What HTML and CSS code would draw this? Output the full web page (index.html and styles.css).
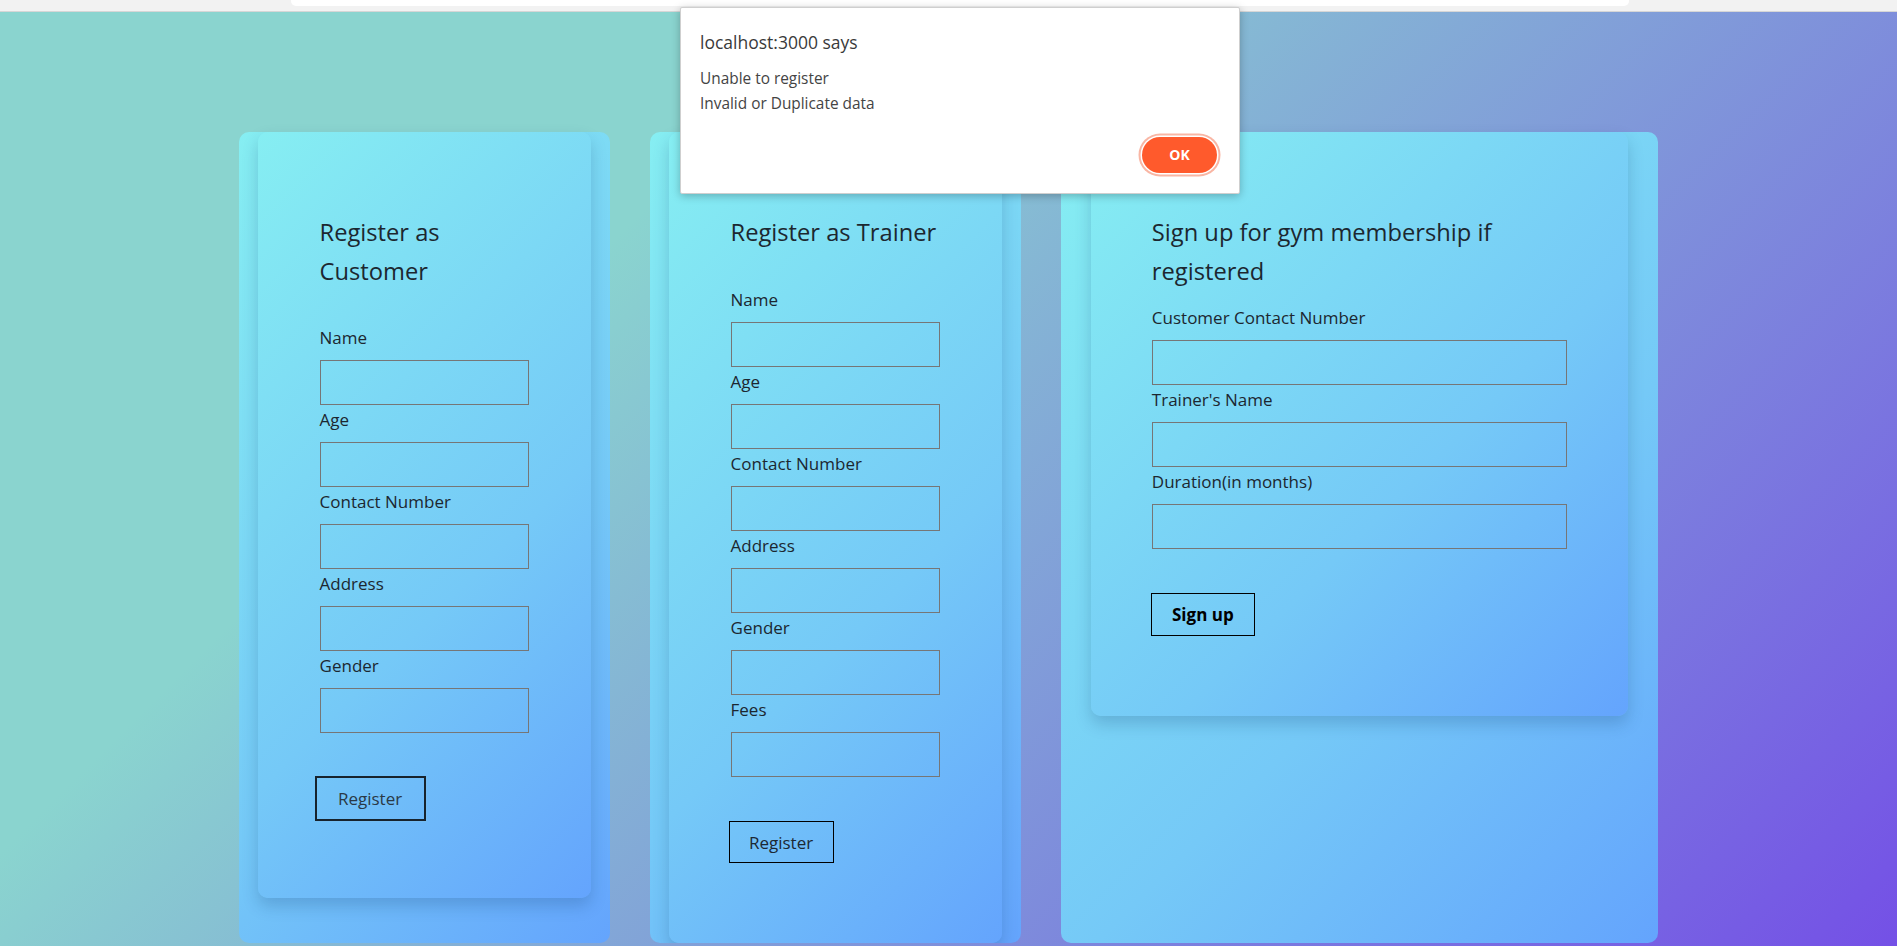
FILE: index.html
```html
<!DOCTYPE html>
<html lang="en">
<head>
<meta charset="utf-8">
<title>Gym Registration</title>
<link rel="stylesheet" href="styles.css">
</head>
<body>
<div class="chrome"><div class="chrome-tab"></div></div>

<main class="cards">
  <section class="card card-narrow">
    <form class="panel panel-customer">
      <h2 class="title">Register as Customer</h2>
      <label class="field-label">Name</label>
      <input class="field" type="text">
      <label class="field-label">Age</label>
      <input class="field" type="text">
      <label class="field-label">Contact Number</label>
      <input class="field" type="text">
      <label class="field-label">Address</label>
      <input class="field" type="text">
      <label class="field-label">Gender</label>
      <input class="field" type="text">
      <button type="button" class="btn btn-customer">Register</button>
    </form>
  </section>

  <section class="card card-narrow">
    <form class="panel">
      <h2 class="title">Register as Trainer</h2>
      <label class="field-label">Name</label>
      <input class="field" type="text">
      <label class="field-label">Age</label>
      <input class="field" type="text">
      <label class="field-label">Contact Number</label>
      <input class="field" type="text">
      <label class="field-label">Address</label>
      <input class="field" type="text">
      <label class="field-label">Gender</label>
      <input class="field" type="text">
      <label class="field-label">Fees</label>
      <input class="field" type="text">
      <button type="button" class="btn btn-trainer">Register</button>
    </form>
  </section>

  <section class="card card-wide">
    <form class="panel panel-signup">
      <h2 class="title title-tight">Sign up for gym membership if registered</h2>
      <label class="field-label">Customer Contact Number</label>
      <input class="field" type="text">
      <label class="field-label">Trainer's Name</label>
      <input class="field" type="text">
      <label class="field-label">Duration(in months)</label>
      <input class="field" type="text">
      <button type="button" class="btn btn-signup">Sign up</button>
    </form>
  </section>
</main>

<div class="dialog" role="alertdialog">
  <div class="dialog-title">localhost:3000 says</div>
  <div class="dialog-msg">Unable to register<br>Invalid or Duplicate data</div>
  <div class="dialog-actions"><button type="button" class="dialog-ok">OK</button></div>
</div>
</body>
</html>
```

FILE: styles.css
```css
html {
  height: 100%;
  background: linear-gradient(135deg, #8ad4cf 30%, #7450e6 100%);
}

body {
  margin: 0;
  font-family: "Open Sans", "Noto Sans", sans-serif;
  color: #1c2730;
}

.chrome {
  height: 11px;
  background: #f2f2f2;
  border-bottom: 1px solid #d6d6d6;
}

.chrome-tab {
  margin-left: 291px;
  width: 1338px;
  height: 6px;
  background: #ffffff;
  border-radius: 0 0 5px 5px;
}

.cards {
  display: flex;
  justify-content: center;
  gap: 40px;
  margin-top: 120px;
}

.card {
  border-radius: 10px;
  background: linear-gradient(135deg, #86eef2 0%, #75c9f7 60%, #64a4fd 100%);
}

.card-narrow { width: 371px; }
.card-wide { width: 597px; }

.panel {
  width: 90%;
  margin: 0 auto;
  box-sizing: border-box;
  padding: 81px 62px 80px;
  border-radius: 10px;
  background: linear-gradient(135deg, #86eef2 0%, #75c9f7 60%, #64a4fd 100%);
  box-shadow: 0 8px 16px rgba(20, 60, 110, 0.22);
}

.panel-customer { padding-bottom: 77px; }
.panel-signup { padding-left: 61px; padding-right: 61px; }

.title {
  margin: 0 0 36px;
  font-size: 23.7px;
  font-weight: 400;
  line-height: 38.5px;
  color: #1c2730;
}

.title-tight { margin-bottom: 15.5px; }

.field-label {
  display: block;
  margin-bottom: 10px;
  font-size: 17px;
  line-height: 24px;
  color: #1c2730;
}

.field {
  display: block;
  width: 100%;
  height: 45px;
  box-sizing: border-box;
  margin: 0 0 3px;
  padding: 0 4px;
  border: 1px solid #767676;
  background: transparent;
  font: inherit;
}

.btn {
  display: block;
  box-sizing: border-box;
  padding: 0;
  background: transparent;
  font-family: "Open Sans", "Noto Sans", sans-serif;
  font-size: 17px;
  text-align: center;
  cursor: pointer;
}

.btn-customer {
  width: 111px;
  height: 45px;
  margin: 43px 0 0 -5px;
  border: 2px solid #17232d;
  color: #2a3946;
  box-shadow: 1px 1px 0 rgba(120, 190, 240, 0.6);
}

.btn-trainer {
  width: 105px;
  height: 42px;
  margin: 44.5px 0 0 -2px;
  border: 1px solid #000;
  color: #1c2833;
}

.btn-signup {
  width: 104px;
  height: 43px;
  margin: 44.5px 0 0 -1px;
  border: 1px solid #000;
  color: #000;
  font-weight: 700;
}

.dialog {
  position: absolute;
  left: 680px;
  top: 7px;
  width: 560px;
  height: 187px;
  box-sizing: border-box;
  padding: 22px 22px 0 19px;
  background: #ffffff;
  border: 1px solid #cfcfcf;
  border-radius: 2px;
  box-shadow: 0 2px 8px rgba(0, 0, 0, 0.25);
}

.dialog-title {
  font-size: 17.5px;
  line-height: 24px;
  color: #3a3a3a;
}

.dialog-msg {
  margin-top: 11.5px;
  font-size: 15.4px;
  line-height: 25px;
  color: #444;
}

.dialog-actions {
  display: flex;
  justify-content: flex-end;
  margin-top: 21px;
}

.dialog-ok {
  width: 75px;
  height: 36px;
  padding: 0;
  border: none;
  border-radius: 18px;
  background: #ff5a2c;
  color: #ffffff;
  font-family: "Open Sans", "Noto Sans", sans-serif;
  font-size: 14px;
  font-weight: 700;
  box-shadow: 0 0 0 1.5px #ffffff, 0 0 0 3.5px #f9b6a4;
}
```
